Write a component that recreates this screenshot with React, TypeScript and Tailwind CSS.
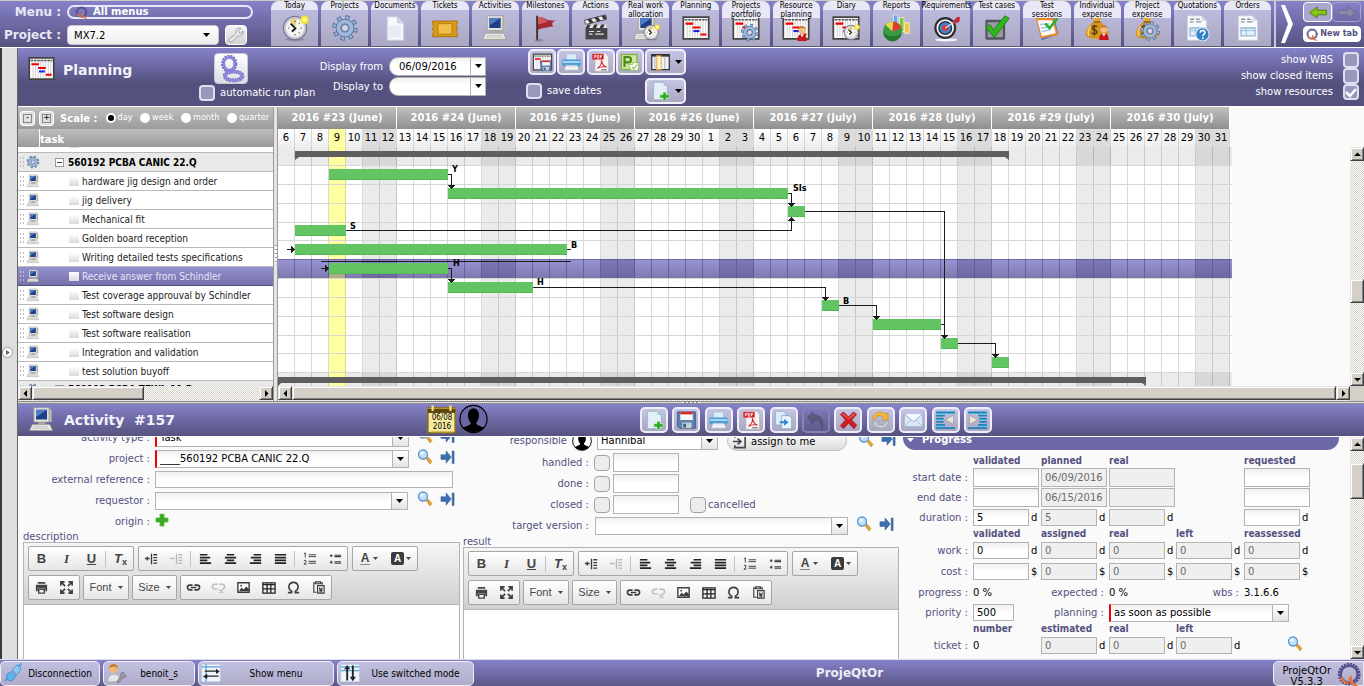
import React from "react";

const COND = "font-['DejaVu_Sans_Condensed','DejaVu_Sans',sans-serif]";

/* ---------- drawings (32x32 canvas) ---------- */

const Gear = () => (
  <g>
    <circle cx="16" cy="16" r="11.5" fill="none" stroke="#4f6f9c" strokeWidth="6" strokeDasharray="4.6 4.43" />
    <circle cx="16" cy="16" r="11.5" fill="none" stroke="#9db4d6" strokeWidth="4" strokeDasharray="2.8 6.23" strokeDashoffset="-0.9" />
    <circle cx="16" cy="16" r="7.5" fill="none" stroke="#4f6f9c" strokeWidth="6.4" />
    <circle cx="16" cy="16" r="7.5" fill="none" stroke="#a3b8d8" strokeWidth="4.6" />
    <circle cx="16" cy="16" r="4" fill="#d5d6ea" stroke="#54749f" strokeWidth="1" />
  </g>
);
const Clock = () => (
  <g>
    <ellipse cx="16" cy="29" rx="11" ry="2" fill="#6c6a80" opacity=".5" />
    <circle cx="16" cy="16" r="14" fill="#77788c" />
    <circle cx="16" cy="16" r="12.6" fill="#c9cad8" />
    <circle cx="16" cy="16" r="10.4" fill="#f4f4f0" />
    <path d="M16 16L10 8A9.5 9.5 0 0 1 18 6z" fill="#e8d27c" />
    <path d="M11 11l5.5 5.5L12.5 20" fill="none" stroke="#111" strokeWidth="2" />
    <path d="M16 7.500v1.600M24 16h-1.600M16 24.500v-1.600M8 16h1.500M21.500 10l-1 1M21.500 22l-1-1" stroke="#555" strokeWidth="1.200" />
    <circle cx="27" cy="6.500" r="4.800" fill="#f5e526" />
    <circle cx="27" cy="6.500" r="2.500" fill="#fffb9a" />
  </g>
);
const Doc = () => (
  <g>
    <path d="M7 3h12l7 7v20H7z" fill="#f6f8fc" stroke="#c3c9dc" strokeWidth="1.400" />
    <path d="M19 3v7h7z" fill="#d5dcec" stroke="#b8c0d6" />
    <path d="M9 13h14v14H9z" fill="#dfe5f2" opacity=".7" />
  </g>
);
const Ticket = () => (
  <g>
    <path d="M2 8h28v3.500a2 2 0 0 0 0 3.500v3a2 2 0 0 0 0 3.500V26H2v-4a2 2 0 0 0 0-3.500v-3a2 2 0 0 0 0-3.500z" fill="#d99a16" stroke="#a86f0c" />
    <path d="M8 11h16v12H8z" fill="#f0bd48" stroke="#b57c10" />
  </g>
);
const Computer = () => (
  <g>
    <path d="M8 3h17l3 2v14H8z" fill="#b9bab4" />
    <path d="M7 2h18v17H7z" fill="#e4e4de" stroke="#9a9b95" />
    <path d="M9.500 4.500h13v11.500h-13z" fill="#1f3f86" />
    <path d="M9.500 4.500h13L9.500 13z" fill="#4f7cc4" />
    <path d="M13 19h7l2 4H11z" fill="#a9aaa4" />
    <path d="M5 22h21l3 7H2z" fill="#efefea" stroke="#9a9b95" />
    <path d="M6 24.500h18M5 26.500h21" stroke="#bdbeb8" />
  </g>
);
const Flag = () => (
  <g>
    <path d="M7 2v28" stroke="#4a2a2a" strokeWidth="2.200" />
    <path d="M8 4c6-3 8 5 20 3-4 2-5 5-2 7-7 1-12 2-18 4z" fill="#a52a35" />
    <path d="M8 4c6-3 8 5 14 3.500-6 2-9 4-14 4z" fill="#cc5a60" />
    <ellipse cx="9" cy="30" rx="5" ry="1.500" fill="#66647c" opacity=".5" />
  </g>
);
const Clapper = () => (
  <g>
    <path d="M3 7L27 1l1 5L4 12z" fill="#ececec" stroke="#444" />
    <path d="M6 6.300l3.500 4.500 4-1L10 5.200zM14 4.300l3.500 4.500 4-1L18 3.200zM22 2.300L25 6.700l3-1-1-4z" fill="#3a3a3a" />
    <path d="M4 12h24v4H4z" fill="#e6e6e6" />
    <path d="M6 12h4l-2 4H4zM14 12h4l-2 4h-4zM22 12h4l-2 4h-4z" fill="#3a3a3a" />
    <path d="M4 16h25v13H4z" fill="#454648" />
    <path d="M8 20h6M17 20h4M8 23h4M15 23h10" stroke="#ddd" strokeWidth="1.300" />
  </g>
);
const PlanArt = () => (
  <g>
    <path d="M1.500 3.500h29v25h-29z" fill="#fff" stroke="#444" strokeWidth="2" />
    <path d="M6 5v22M9 5v22M12 5v22M15 5v22M18 5v22M21 5v22M24 5v22M27 5v22" stroke="#c9c9c9" />
    <path d="M3 6.500h26" stroke="#555" strokeWidth="1.600" strokeDasharray="3 1" />
    <path d="M4 11h9M12 15.500h9M21 23.500h7" stroke="#f00000" strokeWidth="2.400" />
    <path d="M13 19.500h7" stroke="#2222d8" strokeWidth="2.400" />
  </g>
);
const Person = () => (
  <g>
    <path d="M8 29c0-8 3-11 8-11s8 3 8 11z" fill="#c8141c" />
    <path d="M13 18l3 5 3-5z" fill="#fff" />
    <circle cx="16" cy="11" r="6" fill="#f0bb80" />
    <path d="M10 10c0-8 12-8 12 0-2-3-8-4-12 0z" fill="#c47a24" />
  </g>
);
const Reports = () => (
  <g>
    <path d="M13 1h5v14h-5z" fill="#69a8e6" stroke="#d8ebff" />
    <path d="M20 4h5v16h-5z" fill="#7ec53a" stroke="#e3f6cf" />
    <path d="M26 10h5v12h-5z" fill="#f0c23c" stroke="#fff2bf" />
    <circle cx="12" cy="19.500" r="11" fill="#3c9a44" />
    <path d="M12 20L4 12.500A11 11 0 0 1 13 8.500z" fill="#e8d64a" />
    <path d="M12 20l1-11.500a11 11 0 0 1 9 8z" fill="#e03b30" />
    <path d="M1.500 21a10.500 10.500 0 0 0 21 0c-3 5-16 6-21 0z" fill="#247a30" />
  </g>
);
const Target = () => (
  <g>
    <ellipse cx="15" cy="29.500" rx="13" ry="1.800" fill="#f2f2f8" />
    <circle cx="14" cy="16" r="12.500" fill="#2c2d33" />
    <circle cx="14" cy="16" r="10" fill="#f4f4f4" />
    <circle cx="14" cy="16" r="8" fill="#2c2d33" />
    <circle cx="14" cy="16" r="6.500" fill="#3f83d8" />
    <circle cx="14" cy="16" r="3.500" fill="#e0352c" />
    <path d="M14 16L29 6" stroke="#ddd" strokeWidth="1.500" />
    <path d="M23 8l5-5 3 1-1 5-6 2z" fill="#c4283a" />
  </g>
);
const Check = () => (
  <g>
    <path d="M4 8h20v20H4z" fill="#9a9aa8" stroke="#56565f" strokeWidth="2.600" strokeLinejoin="round" />
    <path d="M3 15l5-3 4 6L25 2l5 3-17 22z" fill="#30b51f" stroke="#1c7f12" />
  </g>
);
const Clip = () => (
  <g>
    <path d="M4 7l20-4 5 20-19 7z" fill="#3d6fc8" />
    <path d="M3 4h20l6 20-20 4z" fill="#e88a28" />
    <path d="M5 7h17l4 15-16 3.500z" fill="#fbfbfb" />
    <path d="M8 12l10-1M9 16l11-1M10 20l10-2" stroke="#9cc4e8" strokeWidth="1.500" />
    <path d="M14 11l5 5L28 5" fill="none" stroke="#2fae2b" strokeWidth="3" />
  </g>
);
const Bag = () => (
  <g>
    <path d="M11 4h10l-3 6h-4z" fill="#e3a62d" />
    <path d="M12 9h8c5 4 9 9 9 14 0 7-26 7-26 0 0-5 4-10 9-14z" fill="#d3951d" />
    <path d="M9 14c-3 4-4 8-2 11" stroke="#f3cf78" strokeWidth="2" fill="none" />
    <path d="M12 9h8" stroke="#8a5a0a" strokeWidth="1.500" />
    <path d="M16 14.500c-2-2-6-1-5.500 1.500.5 2.500 5.500 1.500 5.500 4.500 0 2.500-4 3-6 1M13 12.500v12" stroke="#5b3c08" strokeWidth="1.600" fill="none" />
  </g>
);
const Form = () => (
  <g>
    <path d="M5 2h16l6 6v22H5z" fill="#f8fafd" stroke="#c4cad8" />
    <path d="M21 2v6h6z" fill="#d4dceb" />
    <path d="M8 6h5M8 9h4M15 6h4M15 9h6" stroke="#8e8f98" strokeWidth="1.500" />
    <path d="M8 16h16v9H8z" fill="#e6f1fa" stroke="#8fb9da" strokeWidth="1.500" />
    <path d="M8 19h16M14 16v9" stroke="#8fb9da" />
  </g>
);
const Question = () => (
  <g>
    <circle cx="16" cy="16" r="13" fill="#2f83c4" stroke="#cfe6f8" strokeWidth="2" />
    <path d="M11.500 13c0-6 9.500-6 9.500-.5 0 3.500-4.500 3.500-4.500 7" fill="none" stroke="#fff" strokeWidth="3" />
    <circle cx="16.500" cy="23.500" r="1.900" fill="#fff" />
  </g>
);
const Printer = () => (
  <g>
    <path d="M8 3h16v10H8z" fill="#d9ecfa" stroke="#9fb9d0" />
    <path d="M3 12h26c2 0 2 3 2 6s-1 5-3 5H4c-2 0-3-2-3-5s0-6 2-6z" fill="#4a9fdc" />
    <path d="M2 16h28" stroke="#a9d8f6" strokeWidth="3" />
    <path d="M7 21h18l3 8H4z" fill="#f5f7fa" stroke="#9fa9b6" />
    <path d="M9 24h14" stroke="#c3cad4" />
  </g>
);
const Pdf = () => (
  <g>
    <path d="M7 2h17l5 5v24H7z" fill="#f4f4f4" stroke="#a9a9a9" />
    <path d="M3 3h18v9H3z" fill="#d3141c" />
    <path d="M6 10V5h3v3H6M11 5v5h2.500V5zM16 10V5h3M16 7.500h2.500" stroke="#fff" strokeWidth="1.200" fill="none" />
    <path d="M11 26c5-3 7-8 6.500-13 1 7 4 10 8 11-5-1-10-.5-14.500 2z" fill="none" stroke="#dd2a30" strokeWidth="1.700" />
    <path d="M17 28.500h9" stroke="#555" strokeWidth="1.500" />
  </g>
);
const ProjFile = () => (
  <g>
    <path d="M2 3h27v26H2z" fill="#7cb334" />
    <path d="M4 5h23v22H4z" fill="#cfe6a6" />
    <path d="M8 24V8h6c6 0 6 8.500 0 8.500H8.500" fill="none" stroke="#4f8a14" strokeWidth="3.400" />
    <path d="M15 20h6v-3h9v12H18z" fill="#fff" stroke="#7cb334" />
    <path d="M20 24l3 3 5-7" fill="none" stroke="#8cc152" strokeWidth="2" />
  </g>
);
const Columns = () => (
  <g>
    <path d="M2 4h28v24H2z" fill="#f2f3f5" stroke="#33343a" strokeWidth="2" />
    <path d="M2 6h28" stroke="#33343a" strokeWidth="3" />
    <path d="M23 7v20M7 7v20" stroke="#a9aab2" strokeWidth="1.500" />
    <path d="M10 6h7v22h-7z" fill="#fff6dc" stroke="#e39b18" strokeWidth="2" strokeDasharray="2.500 1" />
  </g>
);
const AddDoc = () => (
  <g>
    <path d="M5 2h16l6 6v22H5z" fill="#e4f0f8" stroke="#9db6c8" strokeWidth="1.500" />
    <path d="M21 2v6h6z" fill="#a9c9de" />
    <path d="M20 18h5v4h5v5h-5v4h-5v-4h-5v-5h5z" fill="#2dab22" stroke="#d9f5d4" strokeWidth=".8" />
  </g>
);
const Floppy = () => (
  <g>
    <path d="M2 3h28v26H5l-3-3z" fill="#5f83b0" stroke="#33527c" strokeWidth="1.500" />
    <path d="M6 3h20v13H6z" fill="#f7f7f7" />
    <path d="M6 3h20v4H6z" fill="#d62a2a" />
    <path d="M9 20h15v9H9z" fill="#c7ced8" />
    <path d="M11 22h4v6h-4z" fill="#33527c" />
  </g>
);
const CopyArt = () => (
  <g>
    <path d="M3 2h13l4 4v18H3z" fill="#dcebf7" stroke="#87a8c6" strokeWidth="1.300" />
    <path d="M13 9h12l4 4v17H13z" fill="#eaf4fb" stroke="#87a8c6" strokeWidth="1.300" />
    <path d="M10 18h7v-4l7 5.500-7 5.500v-4h-7z" fill="#2f86d6" />
  </g>
);
const Undo = () => <path d="M3 11L12 3v5c12-1 18 8 15 21-1-9-6-13-15-12v6z" fill="#5d5b7c" stroke="#4a4868" />;
const RedX = () => (
  <g>
    <path d="M3 7l5-4 8 8 8-8 5 4-8 9 8 8-4 6-9-9-8 9-5-5 8-9z" fill="#d01d24" stroke="#8d1016" />
    <path d="M5 7l3-2 8 8 8-8 3 2-10 8z" fill="#ee6a6c" opacity=".7" />
  </g>
);
const Refresh = () => (
  <g>
    <path d="M3 15C4 3 17 0 24 7l4-3v12H17l4-4C16 7 9 9 8 15z" fill="#f0b840" stroke="#c88a1c" />
    <path d="M29 18C28 29 15 33 8 26l-4 3V18h11l-4 4c5 4 12 2 13-4z" fill="#c3ccd0" stroke="#8d9a9f" />
  </g>
);
const Mail = () => (
  <g>
    <path d="M1 6h30v21H1z" fill="#dbe8f8" stroke="#8fa9cf" strokeWidth="1.500" />
    <path d="M1 27l11-11M31 27L20 16" stroke="#a9bfdf" strokeWidth="1.500" />
    <path d="M1 6l15 13L31 6" fill="#f4f8fd" stroke="#8fa9cf" strokeWidth="1.500" />
  </g>
);
const Outdent = () => (
  <g>
    <path d="M1 4h30M1 9h14M1 14h12M1 19h12M1 24h14M1 29h30" stroke="#1b84b8" strokeWidth="3" />
    <path d="M1 5.500h30M1 15.500h12M1 25.500h14" stroke="#26c0e8" strokeWidth="1" />
    <path d="M29 8v15L15 15.500z" fill="#e8e6da" stroke="#8c8a80" />
  </g>
);
const Indent = () => (
  <g>
    <path d="M1 4h30M17 9h14M19 14h12M19 19h12M17 24h14M1 29h30" stroke="#1b84b8" strokeWidth="3" />
    <path d="M1 5.500h30M19 15.500h12M17 25.500h14" stroke="#26c0e8" strokeWidth="1" />
    <path d="M3 8v15l14-7.500z" fill="#e8e6da" stroke="#8c8a80" />
  </g>
);
const Head = () => (
  <g>
    <circle cx="16" cy="16" r="15" fill="#6a67a4" stroke="#000" strokeWidth="1.300" />
    <path d="M4.500 26c3-3 8-2 8.500-6-5-5-4-16 3-16s8 11 3 16c.5 4 5.500 3 8.500 6-6 6-17 6-23 0z" fill="#000" />
  </g>
);
const HeadLight = () => (
  <g>
    <circle cx="16" cy="16" r="15" fill="#fff" stroke="#000" strokeWidth="1.500" />
    <path d="M4.500 26c3-3 8-2 8.500-6-5-5-4-16 3-16s8 11 3 16c.5 4 5.500 3 8.500 6-6 6-17 6-23 0z" fill="#000" />
  </g>
);
const Calendar = () => (
  <g>
    <path d="M1 4h29v26H1z" fill="#f7e9a0" stroke="#8a6f1c" strokeWidth="1.600" />
    <path d="M1 3h29v6H1z" fill="#5a470c" />
    <path d="M1 4h29" stroke="#b8952c" strokeWidth="1.500" />
    <path d="M6 1v6M25 1v6" stroke="#f6e27a" strokeWidth="2.400" />
    <path d="M4 29h24" stroke="#d8bf5a" strokeWidth="1.500" />
  </g>
);
const Lens = () => (
  <g>
    <path d="M17 18l4-3 9 10-4 5z" fill="#e6a23a" stroke="#b87818" />
    <circle cx="12" cy="11" r="9" fill="#bfe0fa" stroke="#5d97cf" strokeWidth="2.600" />
    <circle cx="10" cy="8" r="3.500" fill="#f1f9ff" />
  </g>
);
const Goto = () => <path d="M2 10h11V2l11 13-11 13v-8H2zM26 2h4v27h-4z" fill="#3b6fb0" stroke="#274f86" />;
const Plus = () => <path d="M11 2h10v9h9v10h-9v9H11v-9H2V11h9z" fill="#36a81e" stroke="#8fd080" strokeWidth="1.500" />;
const Plug = () => (
  <g>
    <path d="M3 29l7-8" stroke="#4a9fdc" strokeWidth="3" />
    <path d="M6 18l8-5 7 8-6 7c-5 3-11-3-9-10z" fill="#5fb4ec" stroke="#2f78b4" />
    <path d="M15 11l6-7c5-2 9 3 6 8l-5 7z" fill="#8ccaf2" stroke="#2f78b4" />
    <path d="M24 6l6-5" stroke="#4a9fdc" strokeWidth="3" />
  </g>
);
const UserTool = () => (
  <g>
    <path d="M3 30c0-8 4-12 10-12s9 4 9 12z" fill="#e4e6ea" stroke="#a3a7b0" />
    <circle cx="12" cy="9" r="7" fill="#efb877" />
    <path d="M5 9C4-1 20-1 19 9c-3-4-9-5-14 0z" fill="#c27a2a" />
    <path d="M17 30l7-9c-2-4 1-7 5-6l-2 3 2 2 3-1c0 4-3 6-6 5l-6 8z" fill="#9a9ca3" stroke="#66686e" />
  </g>
);
const ShowMenu = () => (
  <g>
    <path d="M1 2h30v28H1z" fill="#eef4fb" stroke="#b4c4dc" />
    <path d="M1 6h30M8 2v28" stroke="#5aa0dc" strokeWidth="2" />
    <path d="M6 12h18v-3l6 4.500-6 4V14H6zM28 20H10v-3l-7 4.500 7 4V22h18z" fill="#222" />
  </g>
);
const Switched = () => (
  <g>
    <path d="M1 2h30v28H1z" fill="#eef4fb" stroke="#b4c4dc" />
    <path d="M1 6h30M1 12h30" stroke="#5aa0dc" strokeWidth="2" />
    <path d="M10 28V10H6.500L11.500 3l5 7H13v18zM19 4v18h-3.500l5 7 5-7H22V4z" fill="#222" />
  </g>
);
const Wheels = () => (
  <g fill="none">
    <ellipse cx="14" cy="10" rx="7" ry="8" stroke="#6a63c4" strokeWidth="4.500" strokeDasharray="2 1" />
    <ellipse cx="14" cy="10" rx="6.500" ry="7.500" stroke="#8d87d8" strokeWidth="3" />
    <ellipse cx="19" cy="24" rx="10" ry="5" stroke="#6a63c4" strokeWidth="4.500" strokeDasharray="2 1" />
    <ellipse cx="19" cy="24" rx="10" ry="5" stroke="#8d87d8" strokeWidth="3" />
  </g>
);
const QLogo = () => (
  <g fill="none">
    <circle cx="15" cy="15" r="12.500" stroke="#4c4a86" strokeWidth="3" strokeDasharray="2.500 1.200" />
    <circle cx="15" cy="15" r="10.500" stroke="#55528f" strokeWidth="3" />
    <path d="M18 16c0 8 4 12 12 15-8 1-14-2-16-11z" fill="#e8743a" />
    <path d="M5 19a10.500 10.500 0 0 0 9 7" stroke="#e8743a" strokeWidth="3" />
  </g>
);
const Wrench = () => <path d="M3 29c-2-2-1-4 1-6l12-10C14 6 19 1 26 3l-5 5 2 4 4 1 3-5c2 7-3 12-10 10L9 28c-2 2-4 3-6 1z" fill="#e8e8ec" stroke="#8e8e98" strokeWidth="1.500" />;

const Mix = ({ base: B, top: T, x = 12, y = 11, s = 0.62 }: { base: React.FC; top: React.FC; x?: number; y?: number; s?: number }) => (
  <g>
    <B />
    <g transform={`translate(${x} ${y}) scale(${s})`}>
      <T />
    </g>
  </g>
);

const Icon = ({ art: Art, className }: { art: React.FC; className: string }) => (
  <svg viewBox="0 0 32 32" className={`shrink-0 ${className}`} aria-hidden="true">
    <Art />
  </svg>
);

const WorkAlloc = () => <Mix base={Computer} top={Clock} />;
const Portfolio = () => <Mix base={PlanArt} top={Gear} x={9} y={10} s={0.7} />;
const ResPlan = () => <Mix base={PlanArt} top={Person} x={12} y={11} s={0.68} />;
const Diary = () => <Mix base={PlanArt} top={Clock} x={12} y={11} />;
const BagPerson = () => <Mix base={Bag} top={Person} x={13} y={10} s={0.68} />;
const BagGear = () => <Mix base={Bag} top={Gear} x={7} y={7} s={0.78} />;
const Quote = () => <Mix base={Form} top={Question} x={13} y={14} s={0.58} />;
const SavePlan = () => <Mix base={PlanArt} top={Floppy} x={12} y={12} s={0.6} />;

const Arrow = ({ className = "text-black" }: { className?: string }) => (
  <svg viewBox="0 0 7 4" className={`h-1 w-[7px] shrink-0 ${className}`} aria-hidden="true">
    <path d="M0 0h7L3.500 4z" fill="currentColor" />
  </svg>
);

/* ---------- header ---------- */

const MENU: { label: string; art: React.FC; tall?: boolean }[] = [
  { label: "Today", art: Clock },
  { label: "Projects", art: Gear },
  { label: "Documents", art: Doc },
  { label: "Tickets", art: Ticket },
  { label: "Activities", art: Computer },
  { label: "Milestones", art: Flag },
  { label: "Actions", art: Clapper },
  { label: "Real work allocation", art: WorkAlloc, tall: true },
  { label: "Planning", art: PlanArt },
  { label: "Projects portfolio", art: Portfolio, tall: true },
  { label: "Resource planning", art: ResPlan, tall: true },
  { label: "Diary", art: Diary },
  { label: "Reports", art: Reports },
  { label: "Requirements", art: Target },
  { label: "Test cases", art: Check },
  { label: "Test sessions", art: Clip, tall: true },
  { label: "Individual expense", art: BagPerson, tall: true },
  { label: "Project expense", art: BagGear, tall: true },
  { label: "Quotations", art: Quote },
  { label: "Orders", art: Form },
];

const MenuTab = ({ label, art, tall }: { label: string; art: React.FC; tall?: boolean }) => (
  <button className="relative flex min-w-0 flex-1 flex-col items-center justify-end rounded-t-[8px] bg-linear-to-b from-[#c2bfe4] to-[#aaa8c2] pb-[4px]">
    <span
      className={`absolute inset-x-0 top-0 z-10 flex justify-center rounded-t-[8px] bg-[#e9e8f6] text-center text-[8px] leading-[9px] text-black ${COND} ${
        tall ? "h-[17px] px-1" : "h-[9px] whitespace-nowrap"
      }`}
    >
      {label}
    </span>
    <Icon art={art} className="h-[28px] w-[28px]" />
  </button>
);

const Header = () => (
  <header className="flex h-[47px] shrink-0 border-t border-[#cfccc6] bg-linear-to-b from-[#8682ca] to-[#56527f]">
    <div className="flex w-[271px] shrink-0 flex-col gap-[4px] pl-1">
      <div className="flex items-center gap-[6px] pt-[2px]">
        <span className="w-[57px] text-right text-[12px] leading-[18px] font-bold whitespace-nowrap text-[#e8e8f4]">Menu :</span>
        <button className="flex h-[14px] w-[186px] items-center gap-1 rounded-[7px] border-2 border-[#e8e8fa] pl-[6px] text-[10px] leading-[10px] font-bold text-white">
          <Icon art={QLogo} className="h-[13px] w-[14px]" />
          All menus
        </button>
      </div>
      <div className="flex items-center gap-[6px]">
        <label htmlFor="proj" className="w-[57px] text-right text-[12px] font-bold whitespace-nowrap text-[#e8e8f4]">
          Project :
        </label>
        <span className="flex h-5 w-[152px] items-center rounded-[4px] border border-[#c6c6cc] bg-linear-to-b from-white to-[#ececec] pr-2">
          <select id="proj" className="flex-1 appearance-none pl-[6px] text-[10px] text-black outline-none">
            <option>MX7.2</option>
          </select>
          <Arrow />
        </span>
        <button aria-label="Parameters" className="flex h-5 w-[22px] items-center justify-center rounded-[4px] border border-white bg-linear-to-b from-[#f4f4f4] to-[#d2d2d6]">
          <Icon art={Wrench} className="h-4 w-4" />
        </button>
      </div>
    </div>
    <nav className="flex min-w-0 flex-1 gap-[3px] pb-px">
      {MENU.map((m) => (
        <MenuTab key={m.label} {...m} />
      ))}
    </nav>
    <div className="ml-[3px] flex w-[90px] shrink-0">
      <span className="w-[2px] bg-[#c9c7de]" />
      <button aria-label="More menus" className="ml-1 flex w-[14px] items-center">
        <svg viewBox="0 0 14 40" className="h-10 w-[14px]">
          <path d="M1 1h4l8 19-8 19H1l7-19z" fill="#fff" />
        </svg>
      </button>
      <div className="ml-[9px] flex w-[58px] flex-col gap-[4px] pt-[1px]">
        <div className="flex">
          <button aria-label="Back" className="flex h-5 flex-1 items-center justify-center rounded-[4px] border border-white bg-[#a9a6d0]">
            <svg viewBox="0 0 20 14" className="h-[13px] w-5">
              <path d="M1 7l8-6v3.500h10v5H9V13z" fill="#86c417" stroke="#4f7d08" />
            </svg>
          </button>
          <button aria-label="Forward" className="flex h-5 flex-1 items-center justify-center rounded-[4px] border border-[#a5a3c8]">
            <svg viewBox="0 0 20 14" className="h-[13px] w-5">
              <path d="M19 7l-8-6v3.500H1v5h10V13z" fill="#8b89a4" stroke="#6c6a8c" />
            </svg>
          </button>
        </div>
        <button className={`flex h-4 items-center justify-center gap-px rounded-[4px] border border-white bg-white text-[9px] font-bold whitespace-nowrap text-[#54517f] ${COND}`}>
          <Icon art={QLogo} className="h-[13px] w-[13px]" />
          New tab
        </button>
      </div>
    </div>
  </header>
);

/* ---------- planning toolbar ---------- */

const BarCheck = ({ label, checked, right }: { label: string; checked?: boolean; right?: boolean }) => (
  <label className={`flex items-center text-[10px] leading-4 text-white ${right ? "flex-row-reverse gap-[10px]" : "gap-[5px]"}`}>
    <span className="relative flex">
      <input type="checkbox" defaultChecked={checked} className="h-4 w-4 appearance-none rounded-[4px] border-2 border-[#e0dff0] bg-[#9a97bc]" />
      {checked && (
        <svg viewBox="0 0 16 16" className="pointer-events-none absolute inset-0">
          <path d="M3 8l4 4 6-7" fill="none" stroke="#fff" strokeWidth="2.500" />
        </svg>
      )}
    </span>
    <span className="whitespace-nowrap">{label}</span>
  </label>
);

const ToolBtn = ({ art, label, wide, off }: { art: React.FC; label: string; wide?: boolean; off?: boolean }) => (
  <button
    aria-label={label}
    className={`flex h-[26px] shrink-0 items-center justify-center rounded-[5px] border-2 ${wide ? "w-[41px] gap-1" : "w-7"} ${
      off ? "border-[#8684ae]" : "border-[#eeedf8] bg-linear-to-b from-[#c6c4e4] to-[#a9a7c2]"
    }`}
  >
    <Icon art={art} className="h-5 w-[21px]" />
    {wide && <Arrow />}
  </button>
);

const DateCombo = ({ id, value }: { id: string; value: string }) => (
  <span className="flex h-[19px] w-[97px] overflow-hidden rounded-l-[9px] border border-[#b3b3b3] bg-linear-to-b from-[#f2f2f2] to-white to-40%">
    <input id={id} defaultValue={value} className="w-[80px] min-w-0 pl-[9px] text-[10px] text-black outline-none" />
    <button aria-label="Open calendar" className="flex flex-1 items-center justify-center border-l border-[#b3b3b3]">
      <Arrow />
    </button>
  </span>
);

const PlanningBar = () => (
  <div className="flex h-[59px] shrink-0 border-b border-white bg-linear-to-b from-[#8682ca] to-[#54517f] to-60%">
    <div className="flex w-[181px] shrink-0 gap-2 pt-[7px] pl-[10px]">
      <Icon art={PlanArt} className="h-[27px] w-[27px]" />
      <h1 className="pt-[5px] text-[14px] leading-5 font-bold text-[#f2f2fa]">Planning</h1>
    </div>
    <div className="w-[118px] shrink-0">
      <button aria-label="Run plan" className="mt-[5px] ml-[15px] flex h-[31px] w-[34px] items-center justify-center rounded-[4px] border border-[#c9c9d8] bg-linear-to-b from-white to-[#dcdce4]">
        <Icon art={Wheels} className="h-7 w-7" />
      </button>
      <div className="mt-[1px]">
        <BarCheck label="automatic run plan" />
      </div>
    </div>
    <div className="grid w-[169px] shrink-0 auto-rows-[20px] grid-cols-[66px_97px] items-center gap-x-[6px] pt-[8px] text-[10px] text-white">
      <label htmlFor="from" className="text-right whitespace-nowrap">
        Display from
      </label>
      <DateCombo id="from" value="06/09/2016" />
      <label htmlFor="to" className="text-right whitespace-nowrap">
        Display to
      </label>
      <DateCombo id="to" value="" />
    </div>
    <div className="ml-10 w-[160px] shrink-0 pt-px">
      <div className="flex justify-between pl-[2px]">
        <ToolBtn art={SavePlan} label="Save baseline" />
        <ToolBtn art={Printer} label="Print" />
        <ToolBtn art={Pdf} label="Export PDF" />
        <ToolBtn art={ProjFile} label="Export project" />
        <ToolBtn art={Columns} label="Columns" wide />
      </div>
      <div className="mt-[3px] flex items-center justify-between">
        <BarCheck label="save dates" />
        <ToolBtn art={AddDoc} label="New item" wide />
      </div>
    </div>
    <div className="ml-auto flex flex-col items-end pt-[4px] pr-[5px]">
      <BarCheck label="show WBS" right />
      <BarCheck label="show closed items" right />
      <BarCheck label="show resources" right checked />
    </div>
  </div>
);

/* ---------- scroll bars ---------- */

const DITHER = "bg-[repeating-conic-gradient(#d4d0c8_0_25%,#ffffff_0_50%)] bg-size-[2px_2px]";
const RAISED = "border border-t-[#e8e6e0] border-l-[#e8e6e0] border-r-[#404040] border-b-[#404040] bg-[#d4d0c8] shadow-[inset_1px_1px_0_#fff,inset_-1px_-1px_0_#808080]";

const ScrollArrow = ({ d, label }: { d: string; label: string }) => (
  <button aria-label={label} className={`flex h-[14px] w-[14px] shrink-0 items-center justify-center ${RAISED}`}>
    <svg viewBox="0 0 7 7" className="h-[7px] w-[7px]">
      <path d={d} fill="#000" />
    </svg>
  </button>
);

const HScroll = ({ thumb }: { thumb: string }) => (
  <div className={`flex h-[15px] min-w-0 flex-1 ${DITHER}`}>
    <ScrollArrow label="Scroll left" d="M5 0v7L1.500 3.500z" />
    <div className="flex flex-1">
      <div className={`h-[14px] ${thumb} ${RAISED}`} />
    </div>
    <ScrollArrow label="Scroll right" d="M2 0v7l3.500-3.500z" />
  </div>
);

const VScroll = ({ thumb }: { thumb: string }) => (
  <div className={`flex w-[14px] shrink-0 flex-col ${DITHER}`}>
    <ScrollArrow label="Scroll up" d="M0 5h7L3.500 1.500z" />
    <div className="flex-1">
      <div className={`w-[14px] ${thumb} ${RAISED}`} />
    </div>
    <ScrollArrow label="Scroll down" d="M0 2h7L3.500 5.500z" />
  </div>
);

/* ---------- task list ---------- */

const TASKS = [
  "hardware jig design and order",
  "jig delivery",
  "Mechanical fit",
  "Golden board reception",
  "Writing detailed tests specifications",
  "Receive answer from Schindler",
  "Test coverage approuval by Schindler",
  "Test software design",
  "Test software realisation",
  "Integration and validation",
  "test solution buyoff",
];
const SELECTED = 5;

const Grip = () => (
  <span className="h-3 w-[5px] shrink-0 bg-[radial-gradient(#bdbdc6_1px,transparent_1px)] bg-size-[3px_4px]" />
);

const Fold = () => (
  <button aria-label="Collapse" className="flex h-[9px] w-[9px] items-center justify-center border border-[#9a9a9a] bg-white">
    <span className="h-px w-[5px] bg-[#444]" />
  </button>
);

const ProjectRow = ({ name }: { name: string }) => (
  <div className="flex min-h-[18px] items-center border-b border-[#b9b9b9] bg-[#e9e9e9] pl-px">
    <Grip />
    <Icon art={Gear} className="ml-[2px] h-[14px] w-[14px]" />
    <span className="ml-[15px] flex w-[13px]">
      <Fold />
    </span>
    <span className={`text-[10px] leading-[15px] font-bold whitespace-nowrap text-black ${COND}`}>{name}</span>
  </div>
);

const TaskRow = ({ name, selected }: { name: string; selected?: boolean }) => (
  <div
    className={`flex min-h-0 items-center border-b pl-px ${
      selected ? "border-[#54517f] bg-linear-to-b from-[#9591d0] to-[#7571ab] text-[#e6e5f6]" : "border-[#b9b9b9] bg-white text-[#222]"
    }`}
  >
    <Grip />
    <Icon art={Computer} className="ml-[2px] h-[14px] w-[14px]" />
    <span className="ml-[29px] h-[9px] w-[10px] shrink-0 bg-linear-to-b from-white to-[#d9d9d9]" />
    <span className={`ml-[3px] text-[10px] leading-[15px] whitespace-nowrap ${COND}`}>{name}</span>
  </div>
);

const SCALES = ["day", "week", "month", "quarter"];

const TaskPanel = () => (
  <section className="flex w-[256px] shrink-0 flex-col border-r border-[#9a9a9a] bg-white">
    <div className="flex h-[22px] shrink-0 items-center bg-linear-to-b from-[#c0c0c0] to-[#9b9b9b] pl-[2px] text-white">
      <button aria-label="Collapse all" className="flex h-[15px] w-[15px] items-center justify-center rounded-[3px] border border-white bg-[#e2e2e2]">
        <span className="flex h-[9px] w-[9px] items-center justify-center border border-[#888] text-[8px] leading-[8px] text-black">-</span>
      </button>
      <button aria-label="Expand all" className="ml-[4px] flex h-[15px] w-[15px] items-center justify-center rounded-[3px] border border-white bg-[#e2e2e2]">
        <span className="flex h-[9px] w-[9px] items-center justify-center border border-[#888] text-[8px] leading-[8px] text-black">+</span>
      </button>
      <span className="ml-[6px] text-[10px] font-bold whitespace-nowrap">Scale :</span>
      <span className={`ml-2 flex flex-1 justify-between pr-1 text-[9px] ${COND}`}>
        {SCALES.map((s) => (
          <label key={s} className="flex items-center gap-[2px]">
            <input
              type="radio"
              name="scale"
              defaultChecked={s === "day"}
              className="h-[10px] w-[10px] appearance-none rounded-full border-2 border-white bg-white checked:bg-black"
            />
            {s}
          </label>
        ))}
      </span>
    </div>
    <div className="flex h-[18px] shrink-0 bg-linear-to-b from-[#bdbdbd] to-[#9b9b9b]">
      <span className="w-[22px] border-r border-white" />
      <span className="pt-[4px] text-[10px] leading-[14px] font-bold text-white">task</span>
    </div>
    <div className="flex h-[6px] shrink-0 flex-col justify-end overflow-hidden border-b border-[#b9b9b9]">
      <div className="flex shrink-0 items-end pb-1 pl-px">
        <Grip />
        <Icon art={Computer} className="ml-[2px] h-[13px] w-[14px]" />
        <span className="ml-[29px] h-[9px] w-[10px] bg-linear-to-b from-white to-[#d9d9d9]" />
      </div>
    </div>
    <div className="grid h-[228px] shrink-0 grid-rows-12">
      <ProjectRow name="560192 PCBA CANIC 22.Q" />
      {TASKS.map((t, i) => (
        <TaskRow key={t} name={t} selected={i === SELECTED} />
      ))}
    </div>
    <div className="h-[5px] shrink-0 overflow-hidden">
      <ProjectRow name="560193 PCBA TEWL 11.B" />
    </div>
    <div className="flex shrink-0">
      <HScroll thumb="w-[112px]" />
    </div>
  </section>
);

/* ---------- gantt ---------- */

const WEEKS = ["#23 (June)", "#24 (June)", "#25 (June)", "#26 (June)", "#27 (July)", "#28 (July)", "#29 (July)", "#30 (July)"];
const DAYS = Array.from({ length: 56 }, (_, i) => (i < 25 ? i + 6 : i - 24));
const DAY_W = 17;
const TODAY = 3;
const weekend = (i: number) => i % 7 > 4;
const LINES = [18, 37, 56, 75, 93, 112, 131, 150, 169, 188, 206, 225];
const BARS: [number, number, number][] = [
  [3, 10, 22],
  [10, 30, 41],
  [30, 31, 59],
  [1, 4, 78],
  [1, 17, 97],
  [3, 10, 116],
  [10, 15, 135],
  [32, 33, 153],
  [35, 39, 172],
  [39, 40, 191],
  [42, 43, 210],
];
const LINKS = [
  "M170 27.500H173.500V38",
  "M510 46.500H513.500V57",
  "M527 64.500H666.500V189",
  "M68 83.500H513.500V73",
  "M289 102.500H293",
  "M43 114.500H293",
  "M43 121.500H48",
  "M9 102.500H14",
  "M170 121.500H173.500V132",
  "M255 140.500H547.500V151",
  "M561 158.500H598.500V170",
  "M663 177.500H666",
  "M680 196.500H717.500V208",
];
const DOWN: [number, number][] = [
  [173.5, 41],
  [513.5, 59],
  [666.5, 191],
  [173.5, 135],
  [547.5, 153],
  [598.5, 172],
  [717.5, 210],
];
const NAMES: [string, number, number][] = [
  ["Y", 174, 25],
  ["SIs", 515, 44],
  ["S", 72, 82],
  ["B", 293, 101],
  ["H", 175, 119],
  ["H", 259, 138],
  ["B", 565, 157],
];

const Chart = () => (
  <svg viewBox="0 0 954 239" className="block h-[239px] w-[954px] shrink-0" shapeRendering="crispEdges" role="img" aria-label="Gantt chart">
    <defs>
      <linearGradient id="sel" x1="0" y1="0" x2="0" y2="1">
        <stop offset="0" stopColor="#9a95d6" />
        <stop offset="1" stopColor="#7d79ae" />
      </linearGradient>
    </defs>
    <rect width="954" height="239" fill="#fff" />
    <rect width="954" height="18" fill="#ebebeb" />
    <rect y="226" width="954" height="13" fill="#ebebeb" />
    {DAYS.map((_, i) => (weekend(i) ? <rect key={i} x={i * DAY_W} width={DAY_W} height="239" fill="#000" opacity=".08" /> : null))}
    <rect x={TODAY * DAY_W} width={DAY_W} height="239" fill="#ffffa2" />
    {DAYS.map((_, i) => (
      <rect key={i} x={i * DAY_W + 16} width="1" height="239" fill="#000" opacity=".15" />
    ))}
    {LINES.map((y) => (
      <rect key={y} y={y} width="954" height="1" fill="#d6d6d6" />
    ))}
    <rect y="112" width="954" height="19" fill="url(#sel)" />
    <rect y="112" width="954" height="1" fill="#6f6ba8" />
    {DAYS.map((_, i) => (
      <g key={i}>
        {weekend(i) && <rect x={i * DAY_W} y="112" width={DAY_W} height="19" fill="#4c4884" opacity=".35" />}
        <rect x={i * DAY_W + 16} y="112" width="1" height="19" fill="#5b578f" opacity=".8" />
      </g>
    ))}
    <rect x="51" y="127" width="16" height="4" fill="#b0ad86" />
    <path d="M17 4H731V13L727 10H21L17 13zM0 230H868V239L864 236H3L0 239z" fill="#5e5e5e" shapeRendering="auto" />
    {BARS.map(([a, b, y]) => (
      <g key={y}>
        <rect x={a * DAY_W} y={y} width={(b - a) * DAY_W} height="11" fill="#50bb50" />
        <rect x={a * DAY_W} y={y} width={(b - a) * DAY_W} height="10" fill="#62c462" />
      </g>
    ))}
    {LINKS.map((d) => (
      <path key={d} d={d} fill="none" stroke="#1c1c1c" />
    ))}
    {DOWN.map(([x, y]) => (
      <path key={`${x}-${y}`} d={`M${x - 3.5} ${y - 3}h7l-3.500 4z`} fill="#1c1c1c" />
    ))}
    <path d="M510 74h7l-3.500-4zM47 118v7l4-3.500zM13 99v7l4-3.500z" fill="#1c1c1c" />
    {NAMES.map(([t, x, y]) => (
      <text key={`${t}${x}`} x={x} y={y} className={`text-[9px] font-bold ${COND}`} fill="#000">
        {t}
      </text>
    ))}
  </svg>
);

const GanttPanel = () => (
  <section className="flex min-w-0 flex-1 flex-col bg-[#fafafa]">
    <div className="flex h-[22px] shrink-0">
      {WEEKS.map((w) => (
        <div key={w} className="w-[119px] shrink-0 border-r border-white bg-linear-to-b from-[#c0c0c0] to-[#8f8f8f] text-center text-[10px] leading-[22px] font-bold text-white">
          2016 {w}
        </div>
      ))}
    </div>
    <div className="flex h-[18px] shrink-0">
      {DAYS.map((d, i) => (
        <div
          key={i}
          className={`w-[17px] shrink-0 border-r border-[#d6d6d6] text-center text-[10px] leading-[18px] text-black ${
            i === TODAY ? "bg-[#ffffa2]" : weekend(i) ? "bg-[#dcdcdc]" : "bg-linear-to-b from-white to-[#eeeeee]"
          }`}
        >
          {d}
        </div>
      ))}
    </div>
    <div className="flex shrink-0 justify-between">
      <Chart />
      <VScroll thumb="mt-[118px] h-6" />
    </div>
    <div className="flex shrink-0 bg-[#d4d0c8] pr-[14px]">
      <HScroll thumb="w-full" />
    </div>
  </section>
);

/* ---------- activity detail ---------- */

const ACTIONS: [string, React.FC, boolean?][] = [
  ["New", AddDoc],
  ["Save", Floppy],
  ["Print", Printer],
  ["PDF", Pdf],
  ["Copy", CopyArt],
  ["Undo", Undo, true],
  ["Delete", RedX],
  ["Refresh", Refresh],
  ["Send mail", Mail],
  ["Outdent", Outdent],
  ["Indent", Indent],
];

const ActivityBar = () => (
  <div className="flex h-[33px] shrink-0 border-b border-white bg-linear-to-b from-[#8682ca] to-[#56527f]">
    <div className="flex w-[409px] shrink-0 gap-[9px] pl-[10px]">
      <Icon art={Computer} className="mt-px h-[29px] w-[27px]" />
      <h2 className="text-[14px] leading-[32px] font-bold whitespace-pre text-[#f2f2fa]">Activity  #157</h2>
    </div>
    <div className="relative h-[31px] w-[30px]">
      <Icon art={Calendar} className="h-[31px] w-[30px]" />
      <span className={`absolute inset-x-0 top-[9px] text-center text-[8px] leading-[9px] text-black ${COND}`}>
        06/08
        <br />
        2016
      </span>
    </div>
    <Icon art={Head} className="ml-[2px] h-[30px] w-[29px]" />
    <div className="ml-[152px] flex w-[352px] justify-between pt-[3px]">
      {ACTIONS.map(([label, art, off]) => (
        <ToolBtn key={label} art={art} label={label} off={off} />
      ))}
    </div>
  </div>
);

const LABEL = "shrink-0 text-right text-[10px] leading-[14px] whitespace-nowrap text-[#54517f]";
const BOX = "border border-[#b3b3b3] bg-linear-to-b from-[#f0f0f0] to-white to-50%";

const Combo = ({ id, value, width, required }: { id: string; value: string; width: string; required?: boolean }) => (
  <span className={`flex h-[18px] shrink-0 ${width} ${BOX} ${required ? "border-l-2 border-l-[#f00000]" : ""}`}>
    <select id={id} className="min-w-0 flex-1 appearance-none pl-[3px] text-[10px] leading-4 text-black outline-none">
      <option>{value}</option>
    </select>
    <span className="flex w-4 items-center justify-center border-l border-[#b3b3b3] bg-linear-to-b from-white to-[#e4e4e4]">
      <Arrow />
    </span>
  </span>
);

const Search = () => (
  <button aria-label="Search" className="mb-[3px] h-4 w-4 shrink-0">
    <Icon art={Lens} className="h-4 w-4" />
  </button>
);
const Jump = () => (
  <button aria-label="Go to item" className="mb-[3px] ml-[7px] h-[15px] w-[15px] shrink-0">
    <Icon art={Goto} className="h-[15px] w-[15px]" />
  </button>
);

const INK = "#3c3c3c";
const ED: Record<string, React.ReactNode> = {
  print: (
    <g fill="#444">
      <path d="M4 2h8v2H4zM2 5h12v7h-2V9H4v3H2z" />
      <path d="M5 10h6v4H5z" fill="none" stroke="#444" strokeWidth="1.500" />
    </g>
  ),
  max: <path d="M2 6V2h4M10 2h4v4M14 10v4h-4M6 14H2v-4M2 2l4.500 4.500M14 2L9.500 6.500M14 14L9.500 9.500M2 14l4.500-4.500" fill="none" stroke={INK} strokeWidth="1.700" />,
  inn: <path d="M1 8h5M3.500 6v4M8 3v11M10 4h4M10 7h4M10 10h4M10 13h4" stroke={INK} strokeWidth="1.400" />,
  out: <path d="M1 8h5M8 3v11M10 4h4M10 7h4M10 10h4M10 13h4" stroke="#b8b8b8" strokeWidth="1.400" />,
  left: <path d="M2 4h8M2 7h11M2 10h8M2 13h12" stroke="#222" strokeWidth="1.800" />,
  center: <path d="M4 4h8M2 7h12M4 10h8M2 13h12" stroke="#222" strokeWidth="1.800" />,
  right: <path d="M6 4h8M3 7h11M6 10h8M2 13h12" stroke="#222" strokeWidth="1.800" />,
  full: <path d="M2 4h12M2 7h12M2 10h12M2 13h12" stroke="#222" strokeWidth="1.800" />,
  ol: <path d="M7 4h8M7 6h8M7 11h8M7 13h8M2 3l1.500-1V7M2 10h2v2l-2 2h3" fill="none" stroke={INK} />,
  ul: <path d="M8 4.500h7M8 11.500h7M8 6h7M8 13h7M3 5h3M3 12h3M4.500 3.500v3M4.500 10.500v3" stroke={INK} strokeWidth="1.200" />,
  link: <path d="M7 5.500H4a2.500 2.500 0 0 0 0 5h3M9 5.500h3a2.500 2.500 0 0 1 0 5H9M5 8h6" fill="none" stroke={INK} strokeWidth="1.700" />,
  unlink: <path d="M7 4.500H4a2.500 2.500 0 0 0 0 5h3M9 4.500h3a2.500 2.500 0 0 1 0 5M9 10l4 4M13 10l-4 4" fill="none" stroke="#bdbdbd" strokeWidth="1.500" />,
  image: (
    <g>
      <path d="M2 3h12v10H2z" fill="#fff" stroke={INK} strokeWidth="1.500" />
      <path d="M3 12l3-4 2 2 3-3 3 3v2z" fill={INK} />
      <circle cx="5.500" cy="6" r="1" fill={INK} />
    </g>
  ),
  table: <path d="M2 3h13v11H2zM2 5h13M2 9.500h13M6.500 4v10M10.500 4v10" fill="none" stroke="#222" strokeWidth="1.400" />,
  omega: <path d="M2 13.500h4v-1.500C1 9 3 2.500 8 2.500S15 9 10 12v1.500h4" fill="none" stroke={INK} strokeWidth="1.700" />,
  word: <path d="M5 3H3v10h3M5 2h5v2H5zM10 3h2v2M7 6h7v8H7zM9 8l.7 4L10.500 10l.8 2L12 8" fill="none" stroke={INK} strokeWidth="1.200" />,
};

const EdIcon = ({ k }: { k: string }) => (
  <button aria-label={k} className="flex h-[22px] w-[25px] items-center justify-center">
    <svg viewBox="0 0 16 16" className="h-[15px] w-[15px]">
      {ED[k]}
    </svg>
  </button>
);
const EdText = ({ children, className }: { children: React.ReactNode; className: string }) => (
  <button className={`flex h-[22px] w-[25px] items-center justify-center text-[13px] text-[#444] ${className}`}>{children}</button>
);
const Sep = () => <span className="mx-px h-4 w-[2px] border-l border-[#c4c4c4]" />;
const Group = ({ children, className = "" }: { children: React.ReactNode; className?: string }) => (
  <div className={`flex h-[25px] items-center rounded-[2px] border border-[#a6a6a6] bg-linear-to-b from-white to-[#e6e6e6] ${className}`}>{children}</div>
);
const Caret = () => (
  <svg viewBox="0 0 5 3" className="h-[3px] w-[5px]" aria-hidden="true">
    <path d="M0 0h5L2.500 3z" fill="#444" />
  </svg>
);

const Editor = ({ label }: { label: string }) => (
  <div className="flex min-h-0 flex-1 flex-col">
    <span className="block h-[9px] text-[10px] leading-[8px] text-[#54517f]">{label}</span>
    <div className="flex min-h-0 flex-1 flex-col border border-b-0 border-[#b3b3b3] bg-white">
      <div className="flex flex-col gap-1 border-b border-[#b6b6b6] bg-linear-to-b from-[#f5f5f5] to-[#cfd1cf] pt-[3px] pb-1 pl-1 font-['Liberation_Sans',Arial,sans-serif]">
        <div className="flex gap-1">
          <Group>
            <EdText className="font-bold">B</EdText>
            <EdText className="font-['Liberation_Serif',serif] font-bold italic">I</EdText>
            <EdText className="font-bold underline">U</EdText>
            <Sep />
            <EdText className="font-bold italic">
              T<span className="self-end text-[9px] not-italic">x</span>
            </EdText>
          </Group>
          <Group>
            <EdIcon k="inn" />
            <EdIcon k="out" />
            <Sep />
            <EdIcon k="left" />
            <EdIcon k="center" />
            <EdIcon k="right" />
            <EdIcon k="full" />
            <Sep />
            <EdIcon k="ol" />
            <EdIcon k="ul" />
          </Group>
          <Group>
            <button className="flex w-8 items-center justify-center gap-[3px] text-[12px] font-bold text-[#444]">
              <span className="border-b border-[#888] px-px leading-[12px]">A</span>
              <Caret />
            </button>
            <button className="flex w-8 items-center justify-center gap-[2px] text-[10px] font-bold">
              <span className="rounded-[2px] bg-[#3a3a3a] px-[3px] leading-[13px] text-white">A</span>
              <Caret />
            </button>
          </Group>
        </div>
        <div className="flex gap-[3px]">
          <Group>
            <EdIcon k="print" />
            <EdIcon k="max" />
          </Group>
          <Group className="w-[46px] justify-center">
            <button className="flex items-center gap-[6px] text-[11px] text-[#484848]">
              Font <Caret />
            </button>
          </Group>
          <Group className="w-[45px] justify-center">
            <button className="flex items-center gap-[6px] text-[11px] text-[#484848]">
              Size <Caret />
            </button>
          </Group>
          <Group>
            <EdIcon k="link" />
            <EdIcon k="unlink" />
            <EdIcon k="image" />
            <EdIcon k="table" />
            <EdIcon k="omega" />
            <EdIcon k="word" />
          </Group>
        </div>
      </div>
      <textarea aria-label={label} className="min-h-0 flex-1 resize-none outline-none" />
    </div>
  </div>
);

const DescriptionCol = () => (
  <section className="-mt-[10px] flex w-[442px] shrink-0 flex-col">
    <div className="flex h-[21px] shrink-0 items-center">
      <label htmlFor="type" className={`w-[132px] ${LABEL}`}>activity type :</label>
      <span className="w-[5px]" />
      <Combo id="type" value="Task" width="w-[254px]" required />
      <span className="w-2" />
      <Search />
      <Jump />
    </div>
    <div className="flex h-[21px] shrink-0 items-center">
      <label htmlFor="project" className={`w-[132px] ${LABEL}`}>project :</label>
      <span className="w-[5px]" />
      <Combo id="project" value="____560192 PCBA CANIC 22.Q" width="w-[254px]" required />
      <span className="w-2" />
      <Search />
      <Jump />
    </div>
    <div className="flex h-[21px] shrink-0 items-center">
      <label htmlFor="ext" className={`w-[132px] ${LABEL}`}>external reference :</label>
      <input id="ext" className={`ml-[5px] h-[17px] w-[298px] ${BOX}`} />
    </div>
    <div className="flex h-[21px] shrink-0 items-center">
      <label htmlFor="req" className={`w-[132px] ${LABEL}`}>requestor :</label>
      <span className="w-[5px]" />
      <Combo id="req" value="" width="w-[253px]" />
      <span className="w-[9px]" />
      <Search />
      <Jump />
    </div>
    <div className="flex h-[21px] shrink-0 items-center">
      <span className={`w-[132px] ${LABEL}`}>origin :</span>
      <button aria-label="Add origin" className="mb-[3px] ml-[5px] h-[14px] w-[14px]">
        <Icon art={Plus} className="h-[14px] w-[14px]" />
      </button>
    </div>
    <div className="flex min-h-0 flex-1 flex-col pt-px pl-[5px]">
      <Editor label="description" />
    </div>
  </section>
);

const Tick = ({ id }: { id: string }) => (
  <input id={id} type="checkbox" className="h-4 w-4 shrink-0 appearance-none rounded-[4px] border border-[#a3a3a3] bg-[#ececec]" />
);

const TreatmentCol = () => (
  <section className="-mt-[7px] ml-[3px] flex w-[436px] shrink-0 flex-col">
    <div className="flex h-[22px] shrink-0 items-center">
      <label htmlFor="resp" className={`w-[104px] ${LABEL}`}>responsible</label>
      <Icon art={HeadLight} className="mx-[5px] h-[20px] w-[20px]" />
      <Combo id="resp" value="Hannibal" width="w-[121px]" />
      <button className="ml-[9px] flex h-5 w-[120px] items-center gap-[4px] rounded-full border border-[#c2c2c2] bg-linear-to-b from-white to-[#dcdcdc] pl-[4px] text-[10px] whitespace-nowrap text-black">
        <svg viewBox="0 0 16 16" className="h-[15px] w-[15px]">
          <path d="M3 4V1.500h11v13H3V12M1 8h8M6 5l3.500 3L6 11" fill="none" stroke="#444" strokeWidth="1.700" />
        </svg>
        assign to me
      </button>
      <span className="w-[11px]" />
      <Search />
      <Jump />
    </div>
    {["handled", "done", "closed"].map((n) => (
      <div key={n} className="flex h-[21px] shrink-0 items-center">
        <label htmlFor={n} className={`mr-[5px] w-[126px] ${LABEL}`}>{n} :</label>
        <Tick id={n} />
        <input aria-label={`${n} date`} className={`ml-[3px] h-[19px] w-[66px] ${BOX}`} />
        {n === "closed" && (
          <label className="ml-[11px] flex items-center gap-[2px] text-[10px] text-[#54517f]">
            <Tick id="cancelled" />
            cancelled
          </label>
        )}
      </div>
    ))}
    <div className="flex h-[21px] shrink-0 items-center">
      <label htmlFor="target" className={`mr-[6px] w-[126px] ${LABEL}`}>target version :</label>
      <Combo id="target" value="" width="w-[253px]" />
      <span className="w-[8px]" />
      <Search />
      <Jump />
    </div>
    <div className="flex min-h-0 flex-1 flex-col pt-[2px]">
      <Editor label="result" />
    </div>
  </section>
);

const GRID = "grid grid-cols-[70px_68px_68px_67px_68px_1fr] items-center";
const HEAD = `text-[10px] leading-3 font-bold text-[#54517f] ${COND}`;
const RL = "pr-[5px] text-right text-[10px] whitespace-nowrap text-[#54517f]";

const Val = ({ label, v = "", unit, date, ro }: { label: string; v?: string; unit?: string; date?: boolean; ro?: boolean }) => (
  <span className="flex items-center gap-[2px]">
    <input
      aria-label={label}
      defaultValue={v}
      readOnly={ro}
      className={`px-[3px] text-[10px] outline-none ${date ? "h-[19px] w-[66px]" : "h-[17px] w-[56px]"} ${
        ro ? "border border-[#b3b3b3] bg-[#efefef] text-[#6c6c6c]" : `${BOX} text-black`
      }`}
    />
    {unit && <span className="text-[10px] text-black">{unit}</span>}
  </span>
);

const ProgressCol = () => (
  <section className="ml-[4px] min-w-0 flex-1">
    <h3 className="mr-[11px] flex h-[13px] items-center gap-2 rounded-b-[12px] bg-[#6d69a6] pb-[7px] pl-1 text-[10px] leading-[10px] font-bold text-white">
      <Arrow className="text-white" />
      Progress
    </h3>
    <div className={`${GRID} mt-[5px] h-3 ${HEAD}`}>
      <span />
      <span>validated</span>
      <span>planned</span>
      <span>real</span>
      <span />
      <span>requested</span>
    </div>
    <div className={`${GRID} h-[20px]`}>
      <span className={RL}>start date :</span>
      <Val label="validated start date" date />
      <Val label="planned start date" v="06/09/2016" date ro />
      <Val label="real start date" date ro />
      <span />
      <Val label="requested start date" date />
    </div>
    <div className={`${GRID} h-[20px]`}>
      <span className={RL}>end date :</span>
      <Val label="validated end date" date />
      <Val label="planned end date" v="06/15/2016" date ro />
      <Val label="real end date" date ro />
      <span />
      <Val label="requested end date" date />
    </div>
    <div className={`${GRID} h-[21px]`}>
      <span className={RL}>duration :</span>
      <Val label="validated duration" v="5" unit="d" />
      <Val label="planned duration" v="5" unit="d" ro />
      <Val label="real duration" unit="d" ro />
      <span />
      <Val label="requested duration" unit="d" />
    </div>
    <div className={`${GRID} h-3 ${HEAD}`}>
      <span />
      <span>validated</span>
      <span>assigned</span>
      <span>real</span>
      <span>left</span>
      <span>reassessed</span>
    </div>
    {[
      ["work", "0", "d"],
      ["cost", "", "$"],
    ].map(([n, v, u]) => (
      <div key={n} className={`${GRID} h-[21px]`}>
        <span className={RL}>{n} :</span>
        <Val label={`validated ${n}`} v={v} unit={u} />
        <Val label={`assigned ${n}`} v="0" unit={u} ro />
        <Val label={`real ${n}`} v="0" unit={u} ro />
        <Val label={`left ${n}`} v="0" unit={u} ro />
        <Val label={`reassessed ${n}`} v="0" unit={u} ro />
      </div>
    ))}
    <div className={`${GRID} h-[20px] text-[10px] text-black`}>
      <span className={RL}>progress :</span>
      <span>0 %</span>
      <span className={RL}>expected :</span>
      <span>0 %</span>
      <span className={RL}>wbs :</span>
      <span>3.1.6.6</span>
    </div>
    <div className={`${GRID} h-[21px]`}>
      <label htmlFor="prio" className={RL}>priority :</label>
      <input id="prio" defaultValue="500" className={`h-[17px] w-[41px] px-[3px] text-[10px] text-black outline-none ${BOX}`} />
      <label htmlFor="mode" className={RL}>planning :</label>
      <span className="col-span-3">
        <Combo id="mode" value="as soon as possible" width="w-[180px]" required />
      </span>
    </div>
    <div className={`${GRID} h-3 ${HEAD}`}>
      <span />
      <span>number</span>
      <span>estimated</span>
      <span>real</span>
      <span>left</span>
      <span />
    </div>
    <div className={`${GRID} h-[21px] text-[10px] text-black`}>
      <span className={RL}>ticket :</span>
      <span>0</span>
      <Val label="estimated" v="0" unit="d" ro />
      <Val label="real" v="0" unit="d" ro />
      <Val label="left" v="0" unit="d" ro />
      <span className="flex pl-[43px]">
        <Search />
      </span>
    </div>
  </section>
);

/* ---------- footer ---------- */

const FootBtn = ({ art, label, width }: { art: React.FC; label: string; width: string }) => (
  <button className={`flex h-[25px] shrink-0 items-center rounded-[5px] border border-[#eeedf8] bg-linear-to-b from-[#c2c0e2] to-[#aeacc8] px-[2px] text-[10px] text-black ${width}`}>
    <Icon art={art} className="h-5 w-5" />
    <span className={`flex-1 text-center whitespace-nowrap ${COND}`}>{label}</span>
  </button>
);

const Footer = () => (
  <footer className="flex h-[27px] shrink-0 items-center gap-[3px] overflow-hidden border-t border-[#dddcec] bg-linear-to-b from-[#8682ca] to-[#5c5888]">
    <FootBtn art={Plug} label="Disconnection" width="w-[100px]" />
    <FootBtn art={UserTool} label="benoit_s" width="w-[92px]" />
    <FootBtn art={ShowMenu} label="Show menu" width="w-[136px]" />
    <FootBtn art={Switched} label="Use switched mode" width="w-[137px]" />
    <span className="flex-1 pr-12 text-center text-[12px] font-bold text-[#eeedf6]">ProjeQtOr</span>
    <button className="flex h-[25px] w-[91px] shrink-0 items-start justify-end gap-[6px] rounded-l-[5px] border border-[#eeedf8] bg-linear-to-b from-[#c2c0e2] to-[#aeacc8] text-[10px] leading-[11px] text-black">
      <span className="pt-[3px] text-center">
        ProjeQtOr
        <br />
        V5.3.3
      </span>
      <Icon art={QLogo} className="h-[26px] w-[26px]" />
    </button>
  </footer>
);

export default function App() {
  return (
    <div className="flex h-screen flex-col overflow-hidden bg-[#fafafa] font-['DejaVu_Sans',Verdana,sans-serif]">
      <Header />
      <div className="flex min-h-0 flex-1 border-t border-white">
        <aside className="flex w-[18px] shrink-0 flex-col justify-end border-r border-l-2 border-r-[#666] border-l-[#3a3a3a] bg-[#dedede] pb-[301px]">
          <button aria-label="Expand menu" className="flex h-[11px] w-[11px] items-center justify-center rounded-full border border-[#999] bg-white">
            <svg viewBox="0 0 5 5" className="h-[5px] w-[5px]">
              <path d="M1 0l4 2.500L1 5z" fill="#666" />
            </svg>
          </button>
        </aside>
        <main className="flex min-w-0 flex-1 flex-col">
          <PlanningBar />
          <div className="flex shrink-0">
            <TaskPanel />
            <div className="flex w-1 shrink-0 items-center justify-center border-r border-[#9a9a9a] bg-[#e4e4e4]">
              <span className="h-[18px] w-[2px] bg-[repeating-linear-gradient(#999_0_1px,#fff_1px_4px)]" />
            </div>
            <GanttPanel />
          </div>
          <div className="flex h-[3px] shrink-0 items-center justify-center border-y border-[#8c8c8c] bg-[#dcdcdc]">
            <span className="h-px w-[18px] bg-[repeating-linear-gradient(90deg,#fff_0_2px,#999_2px_4px)]" />
          </div>
          <ActivityBar />
          <div className="flex min-h-0 flex-1">
            <div className="flex min-w-0 flex-1 overflow-hidden">
              <DescriptionCol />
              <TreatmentCol />
              <ProgressCol />
            </div>
            <VScroll thumb="mt-3 h-9" />
          </div>
        </main>
      </div>
      <Footer />
    </div>
  );
}
